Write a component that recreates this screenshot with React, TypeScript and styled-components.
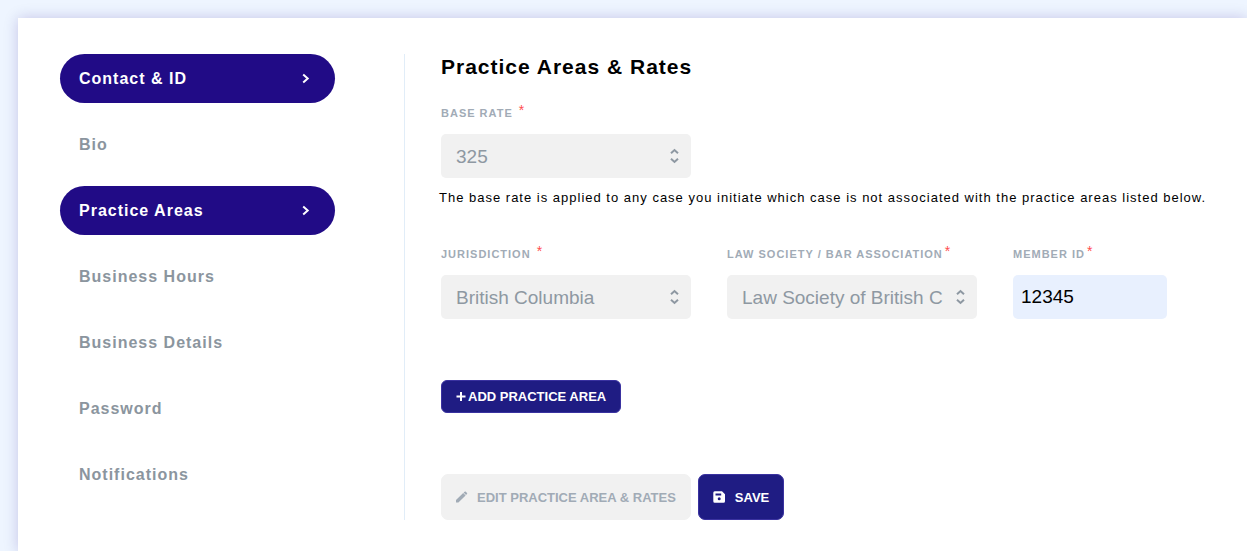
import React from "react";
import styled, { createGlobalStyle, css } from "styled-components";

const GlobalStyle = createGlobalStyle`
  *, *::before, *::after { box-sizing: border-box; }
  body {
    margin: 0;
    background: #eef5ff;
    color: #000;
    font-family: "Liberation Sans", Arial, Helvetica, sans-serif;
  }
  button, input, select { font-family: inherit; }
`;

const Page = styled.div`
  display: flex;
  min-height: 100vh;
  padding: 18px 0 0 18px;
`;

const Card = styled.main`
  flex: 1;
  min-width: 0;
  display: flex;
  align-items: flex-start;
  padding: 36px 16px 32px 42px;
  background: #fff;
  box-shadow: 0 0 14px rgba(34, 11, 134, 0.2);
`;

const Sidebar = styled.nav`
  flex: none;
  align-self: stretch;
  width: 345px;
  padding-right: 69px;
  border-right: 1px solid #e1edf8;
`;

const NavList = styled.ul`
  display: flex;
  flex-direction: column;
  gap: 17px;
  margin: 0;
  padding: 0;
  list-style: none;
`;

const NavLink = styled.a<{ $active?: boolean }>`
  display: flex;
  align-items: center;
  justify-content: space-between;
  height: 49px;
  padding: 0 24px 0 19px;
  border-radius: 25px;
  background: ${(p) => (p.$active ? "#210b86" : "transparent")};
  color: ${(p) => (p.$active ? "#fff" : "#8b959e")};
  font-size: 16px;
  font-weight: 700;
  letter-spacing: 1px;
  text-decoration: none;
`;

const Content = styled.section`
  flex: 1;
  min-width: 0;
  padding-left: 34px;
`;

const Title = styled.h1`
  margin: 0;
  padding: 0 2px;
  font-size: 21px;
  line-height: 26px;
  font-weight: 700;
  letter-spacing: 1px;
`;

const FieldRow = styled.div`
  display: flex;
  flex-wrap: wrap;
  gap: 36px;
  margin-top: 24px;
  padding: 0 2px;
`;

const Field = styled.div<{ $narrow?: boolean }>`
  width: ${(p) => (p.$narrow ? 154 : 250)}px;
`;

const Label = styled.label`
  display: block;
  margin-bottom: 12px;
  color: #a1abb6;
  font-size: 11px;
  line-height: 18px;
  font-weight: 700;
  letter-spacing: 1px;
  white-space: nowrap;
`;

const Required = styled.span`
  margin-left: 2px;
  color: #ff4d4f;
  font-size: 14px;
  line-height: 0;
  font-weight: 400;
  vertical-align: 2px;
`;

const SelectWrap = styled.div`
  position: relative;
`;

const control = css`
  display: block;
  width: 100%;
  height: 44px;
  border: 0;
  border-radius: 5px;
  font-size: 19px;
`;

const Select = styled.select`
  ${control}
  appearance: none;
  padding: 0 34px 0 15px;
  background: #f1f1f1;
  color: #8e98a2;
  opacity: 1;
`;

const SelectArrows = styled.svg`
  position: absolute;
  top: 14px;
  right: 12px;
  pointer-events: none;
`;

const TextInput = styled.input`
  ${control}
  padding: 0 8px;
  background: #e8f0fe;
  color: #000;
`;

const HelpText = styled.p`
  margin: 10px 0 37px;
  font-size: 13px;
  line-height: 20px;
  letter-spacing: 1px;
`;

const Actions = styled.div`
  display: flex;
  flex-wrap: wrap;
  gap: 7px;
  margin-top: 61px;
  padding: 0 2px;
`;

const Button = styled.button<{ $small?: boolean }>`
  display: inline-flex;
  align-items: center;
  gap: ${(p) => (p.$small ? 0 : 9)}px;
  height: ${(p) => (p.$small ? 33 : 46)}px;
  padding: 0 14px;
  border: 1px solid #3a32a0;
  border-radius: ${(p) => (p.$small ? 6 : 7)}px;
  background: #1f1c83;
  color: #fff;
  font-size: 13px;
  font-weight: 700;
  white-space: nowrap;

  &:disabled {
    border-color: #f1f1f1;
    background: #f1f1f1;
    color: #a1abb6;
  }
`;

const ChevronIcon = () => (
  <svg width="10" height="12" viewBox="0 0 10 12" fill="none" stroke="currentColor" strokeWidth="2" aria-hidden="true">
    <path d="M2.2 1.5 L6.7 5.5 L2.2 9.5" />
  </svg>
);

const PlusIcon = () => (
  <svg width="12" height="12" viewBox="0 0 12 12" stroke="currentColor" strokeWidth="2" aria-hidden="true">
    <path d="M5 1 V10 M0.5 5.5 H9.5" />
  </svg>
);

const PencilIcon = () => (
  <svg width="12" height="12" viewBox="0 0 12 12" fill="currentColor" aria-hidden="true">
    <path d="M0 9 L7.2 2 L9.6 4.4 L2.4 11.4 H0 Z M7.6 1.6 L8.6 0.8 Q9.3 0.3 9.9 0.8 L11 1.9 Q11.5 2.5 11 3.1 L10 4 Z" />
  </svg>
);

const SaveIcon = () => (
  <svg width="13" height="12" viewBox="0 0 13 12" fill="currentColor" fillRule="evenodd" aria-hidden="true">
    <path d="M1.7 0.3 H9 L12 3.2 V10.2 Q12 11.7 10.5 11.7 H1.7 Q0.3 11.7 0.3 10.2 V1.8 Q0.3 0.3 1.7 0.3 Z M2.5 2.5 V4.4 H8.2 V2.5 Z M6.2 6.3 A1.5 1.5 0 1 0 6.2 9.3 A1.5 1.5 0 1 0 6.2 6.3 Z" />
  </svg>
);

const navItems = [
  { label: "Contact & ID", active: true },
  { label: "Bio" },
  { label: "Practice Areas", active: true },
  { label: "Business Hours" },
  { label: "Business Details" },
  { label: "Password" },
  { label: "Notifications" },
];

interface SelectFieldProps {
  id: string;
  label: string;
  value: string;
}

const SelectField = ({ id, label, value }: SelectFieldProps) => (
  <Field>
    <Label htmlFor={id}>
      {label}
      <Required>*</Required>
    </Label>
    <SelectWrap>
      <Select id={id} defaultValue={value} disabled>
        <option>{value}</option>
      </Select>
      <SelectArrows width="9" height="16" viewBox="0 0 9 16" fill="none" stroke="#8e98a2" strokeWidth="2" aria-hidden="true">
        <path d="M1 5.2 L4.5 2 L8 5.2 M1 10.8 L4.5 14 L8 10.8" />
      </SelectArrows>
    </SelectWrap>
  </Field>
);

export default function App() {
  return (
    <>
      <GlobalStyle />
      <Page>
        <Card>
          <Sidebar aria-label="Profile sections">
            <NavList>
              {navItems.map((item) => (
                <li key={item.label}>
                  <NavLink href="#" $active={item.active}>
                    {item.label}
                    {item.active && <ChevronIcon />}
                  </NavLink>
                </li>
              ))}
            </NavList>
          </Sidebar>
          <Content>
            <Title>Practice Areas &amp; Rates</Title>
            <FieldRow>
              <SelectField id="base-rate" label="BASE RATE " value="325" />
            </FieldRow>
            <HelpText>
              The base rate is applied to any case you initiate which case is not associated with the practice areas listed below.
            </HelpText>
            <FieldRow>
              <SelectField id="jurisdiction" label="JURISDICTION " value="British Columbia" />
              <SelectField id="law-society" label="LAW SOCIETY / BAR ASSOCIATION" value="Law Society of British Columbia" />
              <Field $narrow>
                <Label htmlFor="member-id">
                  MEMBER ID<Required>*</Required>
                </Label>
                <TextInput id="member-id" type="text" defaultValue="12345" />
              </Field>
            </FieldRow>
            <Actions>
              <Button type="button" $small>
                <PlusIcon />
                ADD PRACTICE AREA
              </Button>
            </Actions>
            <Actions>
              <Button type="button" disabled>
                <PencilIcon />
                EDIT PRACTICE AREA &amp; RATES
              </Button>
              <Button type="submit">
                <SaveIcon />
                SAVE
              </Button>
            </Actions>
          </Content>
        </Card>
      </Page>
    </>
  );
}
